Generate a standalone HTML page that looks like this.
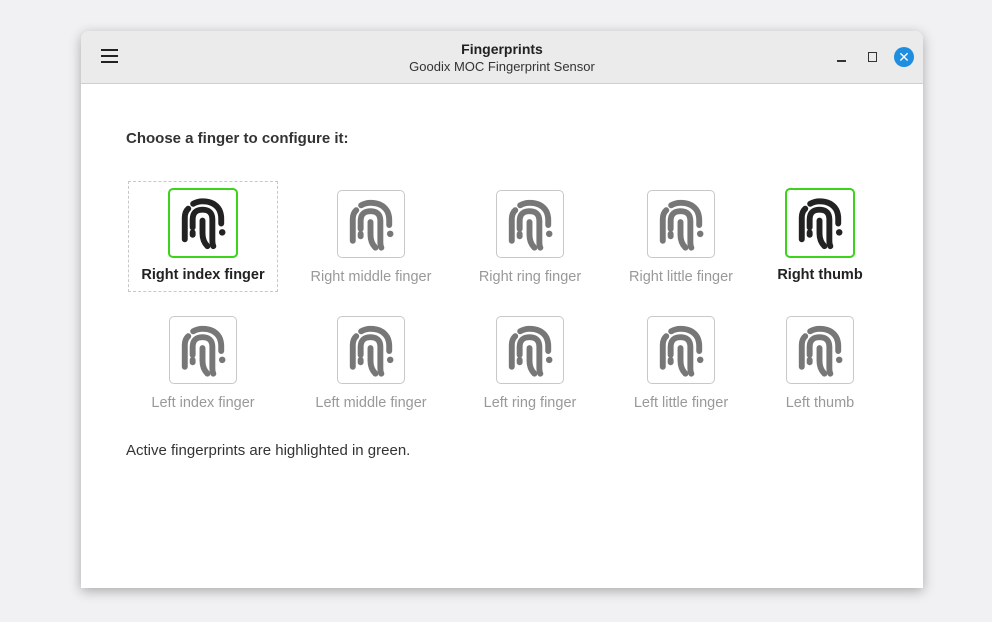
<!DOCTYPE html>
<html><head><style>
body{margin:0;width:992px;height:622px;background:#f1f1f3;font-family:"Liberation Sans","DejaVu Sans",sans-serif;position:relative;overflow:hidden}
.win{position:absolute;left:81px;top:31px;width:842px;height:557px;background:#fff;border-radius:8px 8px 0 0;box-shadow:0 3px 12px rgba(0,0,0,.3);overflow:hidden}
.tb{height:52px;background:#ebebeb;border-bottom:1px solid #cfcfcf;position:relative}
.t1{position:absolute;left:0;right:0;top:10px;text-align:center;font-weight:bold;font-size:14px;color:#222}
.t2{position:absolute;left:0;right:0;top:28px;text-align:center;font-size:13px;color:#333}
.h{position:absolute;left:45px;top:99px;font-size:15px;font-weight:bold;color:#333}
.f{position:absolute;width:150px;text-align:center;font-size:14.5px;color:#999}
.f .b{width:68px;height:68px;border:1px solid #c8c8c8;border-radius:5px;margin:0 auto 11px;box-sizing:border-box;display:flex;align-items:center;justify-content:center}
.f.on{color:#222;font-weight:bold}
.f.on .b{border:2px solid #3dd21c;width:70px;height:70px;margin-bottom:9px}
.foot{position:absolute;left:45px;top:411px;font-size:15px;color:#333}
</style></head><body>
<svg width="0" height="0" style="position:absolute"><defs><g id="fp" fill="none" stroke-width="6" stroke-linecap="round">
<path d="M15 50 V28 Q15 22 18.5 19"/>
<path d="M23.5 14 Q28 11.5 33 11.5 Q45 11.5 50 20 Q52 24 52 29 V34"/>
<path d="M23 38 V30 Q23 20 33 20 Q43 20 43 30 V51 Q43 55 44 57"/>
<path d="M23 43 V45.5"/>
<path d="M33 31 V44 Q33 52 38 57"/>
<circle cx="53" cy="43" r="3.3" fill="currentColor" stroke="none"/>
</g></defs></svg>
<div class="win">
<div class="tb">
<div style="position:absolute;left:20px;top:18px;width:17px">
<div style="height:2px;background:#222;margin-bottom:4px"></div><div style="height:2px;background:#222;margin-bottom:4px"></div><div style="height:2px;background:#222"></div></div>
<div class="t1">Fingerprints</div><div class="t2">Goodix MOC Fingerprint Sensor</div>
<div style="position:absolute;left:756px;top:29px;width:9px;height:2px;background:#333"></div>
<div style="position:absolute;left:787px;top:21px;width:7px;height:8px;border:1.5px solid #333"></div>
<div style="position:absolute;left:813px;top:16px;width:20px;height:20px;border-radius:50%;background:#1e8ee0;color:#fff;font-weight:bold;font-size:14px;text-align:center;line-height:20px">✕</div>
</div>
<div class="h">Choose a finger to configure it:</div>
<div style="position:absolute;left:47px;top:150px;width:148px;height:109px;border:1px dashed #c8c8c8"></div>
<div class="f on" style="left:47px;top:157px"><div class="b"><svg width="66" height="66" viewBox="0 0 67 67" style="color:#222;stroke:#222"><use href="#fp"/></svg></div>Right index finger</div>
<div class="f" style="left:215px;top:159px"><div class="b"><svg width="67" height="67" viewBox="0 0 67 67" style="color:#777;stroke:#777"><use href="#fp"/></svg></div>Right middle finger</div>
<div class="f" style="left:374px;top:159px"><div class="b"><svg width="67" height="67" viewBox="0 0 67 67" style="color:#777;stroke:#777"><use href="#fp"/></svg></div>Right ring finger</div>
<div class="f" style="left:525px;top:159px"><div class="b"><svg width="67" height="67" viewBox="0 0 67 67" style="color:#777;stroke:#777"><use href="#fp"/></svg></div>Right little finger</div>
<div class="f on" style="left:664px;top:157px"><div class="b"><svg width="66" height="66" viewBox="0 0 67 67" style="color:#222;stroke:#222"><use href="#fp"/></svg></div>Right thumb</div>
<div class="f" style="left:47px;top:285px"><div class="b"><svg width="67" height="67" viewBox="0 0 67 67" style="color:#777;stroke:#777"><use href="#fp"/></svg></div>Left index finger</div>
<div class="f" style="left:215px;top:285px"><div class="b"><svg width="67" height="67" viewBox="0 0 67 67" style="color:#777;stroke:#777"><use href="#fp"/></svg></div>Left middle finger</div>
<div class="f" style="left:374px;top:285px"><div class="b"><svg width="67" height="67" viewBox="0 0 67 67" style="color:#777;stroke:#777"><use href="#fp"/></svg></div>Left ring finger</div>
<div class="f" style="left:525px;top:285px"><div class="b"><svg width="67" height="67" viewBox="0 0 67 67" style="color:#777;stroke:#777"><use href="#fp"/></svg></div>Left little finger</div>
<div class="f" style="left:664px;top:285px"><div class="b"><svg width="67" height="67" viewBox="0 0 67 67" style="color:#777;stroke:#777"><use href="#fp"/></svg></div>Left thumb</div>
<div class="foot">Active fingerprints are highlighted in green.</div>
</div>
</body></html>
